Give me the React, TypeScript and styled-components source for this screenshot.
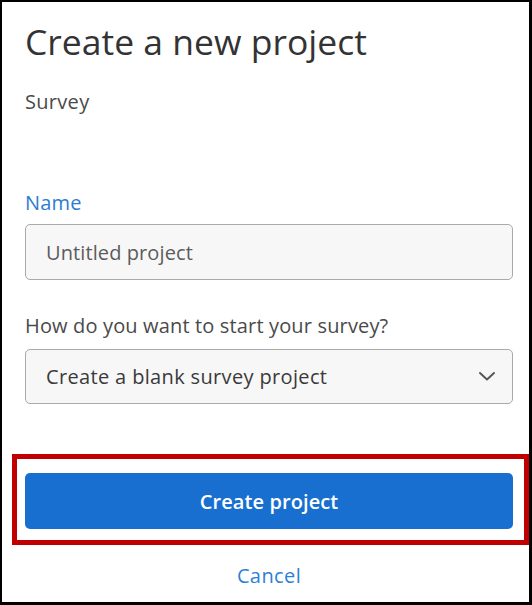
import * as React from 'react'
import styled, { createGlobalStyle } from 'styled-components'

const GlobalStyle = createGlobalStyle`
  html, body {
    margin: 0;
    padding: 0;
    background: #ffffff;
  }
  * {
    box-sizing: border-box;
  }
`

export default function App() {
  return (
    <>
      <GlobalStyle />
      <Frame>
        <Title>Create a new project</Title>
        <Subtitle>Survey</Subtitle>

        <FieldLabel $active>Name</FieldLabel>
        <TextInput placeholder="Untitled project" readOnly />

        <FieldLabel $spaced>How do you want to start your survey?</FieldLabel>
        <Select>
          <SelectValue>Create a blank survey project</SelectValue>
          <Chevron viewBox="0 0 16 9" aria-hidden>
            <path d="M1 1l7 6.5L15 1" />
          </Chevron>
        </Select>

        <Highlight>
          <PrimaryButton type="button">Create project</PrimaryButton>
        </Highlight>

        <CancelLink type="button">Cancel</CancelLink>
      </Frame>
    </>
  )
}

const Frame = styled.div`
  width: 532px;
  height: 605px;
  border-style: solid;
  border-color: #000;
  border-width: 2px 3px 3px 2px;
  padding: 19px 16px 0 23px;
  display: flex;
  flex-direction: column;
  font-family: 'Open Sans', 'Liberation Sans', sans-serif;
  color: #333;
  overflow: hidden;
`

const Title = styled.h1`
  margin: 0;
  font-size: 35.5px;
  line-height: 40px;
  font-weight: 400;
  color: #333;
`

const Subtitle = styled.div`
  margin-top: 29px;
  font-size: 20px;
  line-height: 24px;
  letter-spacing: 0.3px;
  color: #4a4a4a;
`

const FieldLabel = styled.label<{ $active?: boolean; $spaced?: boolean }>`
  display: block;
  margin-top: ${(p) => (p.$spaced ? '34px' : '77px')};
  font-size: 20px;
  line-height: 24px;
  letter-spacing: 0.15px;
  color: ${(p) => (p.$active ? '#2b7cd3' : '#4a4a4a')};
`

const TextInput = styled.input`
  margin-top: 9px;
  width: 100%;
  height: 56px;
  padding: 0 20px;
  border: 1px solid #a9a9a9;
  border-radius: 5px;
  background: #f7f7f7;
  font-family: inherit;
  font-size: 20px;
  letter-spacing: 0.1px;
  color: #333;
  outline: none;

  &::placeholder {
    color: #5c5c5c;
  }
`

const Select = styled.div`
  margin-top: 11px;
  height: 55px;
  display: flex;
  align-items: center;
  justify-content: space-between;
  padding: 0 17px 0 20px;
  border: 1px solid #a9a9a9;
  border-radius: 5px;
  background: #f7f7f7;
`

const SelectValue = styled.span`
  font-size: 20px;
  letter-spacing: 0.35px;
  color: #3a3a3a;
`

const Chevron = styled.svg`
  width: 16px;
  height: 9px;
  fill: none;
  stroke: #555;
  stroke-width: 1.9;
  stroke-linecap: round;
  stroke-linejoin: round;
`

const Highlight = styled.div`
  margin: 50px -16px 0 -13px;
  border: 5px solid #c00000;
  padding: 14px 11px 11px 8px;
`

const PrimaryButton = styled.button`
  display: block;
  width: 100%;
  height: 56px;
  border: none;
  border-radius: 5px;
  background: #196fcf;
  color: #fff;
  font-family: inherit;
  font-size: 20px;
  font-weight: 600;
  letter-spacing: 0.1px;
  cursor: pointer;
`

const CancelLink = styled.button`
  margin-top: 19px;
  align-self: center;
  padding: 0;
  border: none;
  background: none;
  font-family: inherit;
  font-size: 20px;
  line-height: 24px;
  letter-spacing: 0.4px;
  color: #2f7fd6;
  cursor: pointer;
`
